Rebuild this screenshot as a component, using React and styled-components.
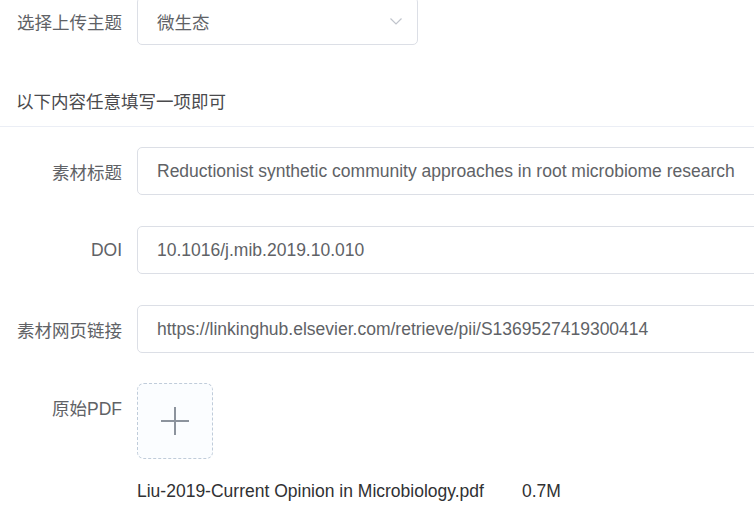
import React from 'react';
import styled, { createGlobalStyle } from 'styled-components';

const GlobalStyle = createGlobalStyle`
  html, body {
    margin: 0;
    padding: 0;
    background: #fff;
    overflow: hidden;
  }
  body {
    font-family: "Liberation Sans", Arial, "Noto Sans CJK SC", sans-serif;
  }
`;

const Page = styled.div`
  width: 754px;
  height: 531px;
  overflow: hidden;
  margin-top: -3px;
`;

const FormRow = styled.div`
  display: flex;
  align-items: flex-start;
  margin-bottom: ${props => props.gap ?? 31}px;
`;

const Label = styled.div`
  flex: 0 0 137px;
  height: 48px;
  box-sizing: border-box;
  padding-right: 15px;
  display: flex;
  align-items: center;
  justify-content: flex-end;
  font-size: 17.5px;
  color: #606266;
  white-space: nowrap;
`;

const Select = styled.div`
  width: 281px;
  height: 48px;
  box-sizing: border-box;
  border: 1px solid #dcdfe6;
  border-radius: 5px;
  display: flex;
  align-items: center;
  justify-content: space-between;
  padding: 0 14px 0 19px;
  font-size: 17.5px;
  color: #606266;
`;

const Input = styled.div`
  width: 680px;
  flex: 0 0 680px;
  height: 48px;
  box-sizing: border-box;
  border: 1px solid #dcdfe6;
  border-radius: 5px;
  display: flex;
  align-items: center;
  padding-left: 19px;
  font-size: 17.5px;
  color: #606266;
  white-space: nowrap;
`;

const SectionTitle = styled.div`
  margin-top: 29px;
  height: 53px;
  box-sizing: border-box;
  display: flex;
  align-items: center;
  padding-left: 16px;
  font-size: 17.5px;
  color: #4a4a4d;
  border-bottom: 1px solid #ebeef5;
  margin-bottom: 20px;
`;

const UploadBox = styled.div`
  width: 76px;
  height: 76px;
  box-sizing: border-box;
  border: 1px dashed #c0ccda;
  border-radius: 7px;
  display: flex;
  align-items: center;
  justify-content: center;
  background: #fbfdff;
`;

const FileLine = styled.div`
  display: flex;
  padding-left: 137px;
  font-size: 17.5px;
  line-height: 24px;
  color: #303133;
  margin-top: -11px;
`;

const FileSize = styled.span`
  margin-left: 38px;
`;

const Arrow = () => (
  <svg width="14" height="14" viewBox="0 0 14 14">
    <path d="M1.5 4.5 L7 10 L12.5 4.5" fill="none" stroke="#c0c4cc" strokeWidth="1.2" />
  </svg>
);

const Plus = () => (
  <svg width="30" height="30" viewBox="0 0 30 30">
    <path d="M15 1 V29 M1 15 H29" stroke="#8c939d" strokeWidth="2" />
  </svg>
);

const App = () => (
  <>
    <GlobalStyle />
    <Page>
      <FormRow gap={0}>
        <Label>选择上传主题</Label>
        <Select>
          <span>微生态</span>
          <Arrow />
        </Select>
      </FormRow>
      <SectionTitle>以下内容任意填写一项即可</SectionTitle>
      <FormRow>
        <Label>素材标题</Label>
        <Input>Reductionist synthetic community approaches in root microbiome research</Input>
      </FormRow>
      <FormRow>
        <Label>DOI</Label>
        <Input>10.1016/j.mib.2019.10.010</Input>
      </FormRow>
      <FormRow gap={30}>
        <Label>素材网页链接</Label>
        <Input>https://linkinghub.elsevier.com/retrieve/pii/S1369527419300414</Input>
      </FormRow>
      <FormRow>
        <Label>原始PDF</Label>
        <UploadBox>
          <Plus />
        </UploadBox>
      </FormRow>
      <FileLine>
        <span>Liu-2019-Current Opinion in Microbiology.pdf</span>
        <FileSize>0.7M</FileSize>
      </FileLine>
    </Page>
  </>
);

export default App;
